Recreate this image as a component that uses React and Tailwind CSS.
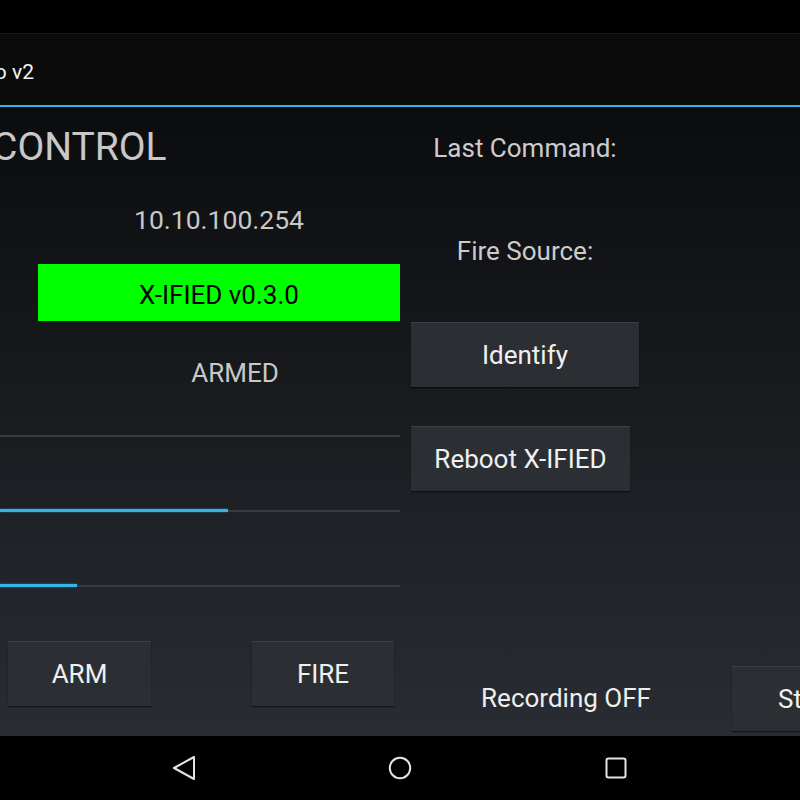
import React from "react"

const seekBars = [0, 228, 77]

function Seek({ value }) {
  return (
    <div className="flex h-[4px] items-center">
      {value > 0 && <div className="h-[3px] bg-[#33b5e5] shadow-[0_0_2px_rgba(51,181,229,0.6)]" style={{ width: value }} />}
      <div className="h-[2px] flex-1 bg-[#383b3f]" />
    </div>
  )
}

function HoloButton({ className, children }) {
  return (
    <div
      className={
        "flex h-[65px] shrink-0 items-center bg-[#2b2f34] border-t border-[#3c4046] text-[26px] leading-none text-[#f0f0f0] shadow-[0_1px_1px_rgba(0,0,0,0.55)] " +
        className
      }>
      {children}
    </div>
  )
}

export default function App() {
  return (
    <div className="flex h-[800px] w-[800px] flex-col overflow-hidden bg-black font-['Roboto',sans-serif]">
      {/* status bar */}
      <div className="h-[33px] shrink-0 bg-black" />

      {/* action bar */}
      <div className="h-[72px] shrink-0 border-t border-[#1a1a1a] bg-[#0b0b0c] pt-[28px]">
        <div className="flex w-[34px] justify-end whitespace-nowrap text-[21px] leading-none text-[#f3f3f3]">
          <span>X-IFIED Demo v2</span>
        </div>
      </div>
      <div className="h-[2px] shrink-0 bg-[#33b5e5]" />

      {/* content */}
      <div className="flex flex-1 bg-gradient-to-b from-[#0b0c0e] to-[#292d33]">
        {/* left column */}
        <div className="flex w-[400px] shrink-0 flex-col">
          <div className="-ml-[8px] mt-[21px] whitespace-nowrap text-[39px] leading-none text-[#c8c8c8]">CONTROL</div>
          <div className="ml-[38px] mt-[40px] text-center text-[26.5px] leading-none text-[#c8c8c8]">10.10.100.254</div>
          <div className="ml-[38px] mt-[30px] flex h-[57px] items-center justify-center bg-[#00ff00] pt-[5px] text-[26px] leading-none text-black">
            X-IFIED v0.3.0
          </div>
          <div className="mt-[39px] pl-[70px] text-center text-[26px] leading-none text-[#c8c8c8]">ARMED</div>

          <div className="mt-[48px]">
            <Seek value={seekBars[0]} />
          </div>
          <div className="mt-[71px]">
            <Seek value={seekBars[1]} />
          </div>
          <div className="mt-[71px]">
            <Seek value={seekBars[2]} />
          </div>

          <div className="mt-[53px] flex">
            <HoloButton className="ml-[8px] w-[143px] justify-center">ARM</HoloButton>
            <HoloButton className="ml-[101px] w-[142px] justify-center">FIRE</HoloButton>
          </div>
        </div>

        {/* right column */}
        <div className="flex flex-1 flex-col pl-[11px]">
          <div className="mt-[28px] w-[228px] text-center text-[26px] leading-none text-[#cccccc]">Last Command:</div>
          <div className="mt-[77px] w-[228px] text-center text-[26px] leading-none text-[#cccccc]">Fire Source:</div>
          <HoloButton className="mt-[58px] w-[228px] justify-center">Identify</HoloButton>
          <HoloButton className="mt-[39px] w-[219px] justify-center">Reboot X-IFIED</HoloButton>

          <div className="mt-[175px] flex h-[65px] items-center">
            <div className="-ml-[11px] mb-[2px] w-[332px] shrink-0 text-center text-[26px] leading-none text-[#eeeeee]">Recording OFF</div>
            <HoloButton className="w-[140px] pl-[46px]">Start</HoloButton>
          </div>
        </div>
      </div>

      {/* navigation bar */}
      <div className="flex h-[64px] shrink-0 items-center justify-center gap-[192px] bg-black">
        <svg width="24" height="24" viewBox="0 0 24 24" fill="none" stroke="#e4e4e4" strokeWidth="2" strokeLinejoin="round">
          <path d="M22 1 L2 12 L22 23 Z" />
        </svg>
        <svg width="24" height="24" viewBox="0 0 24 24" fill="none" stroke="#e4e4e4" strokeWidth="2">
          <circle cx="12" cy="12" r="10.2" />
        </svg>
        <svg width="24" height="24" viewBox="0 0 24 24" fill="none" stroke="#e4e4e4" strokeWidth="2">
          <rect x="2.5" y="2.5" width="19" height="19" rx="2" />
        </svg>
      </div>
    </div>
  )
}
